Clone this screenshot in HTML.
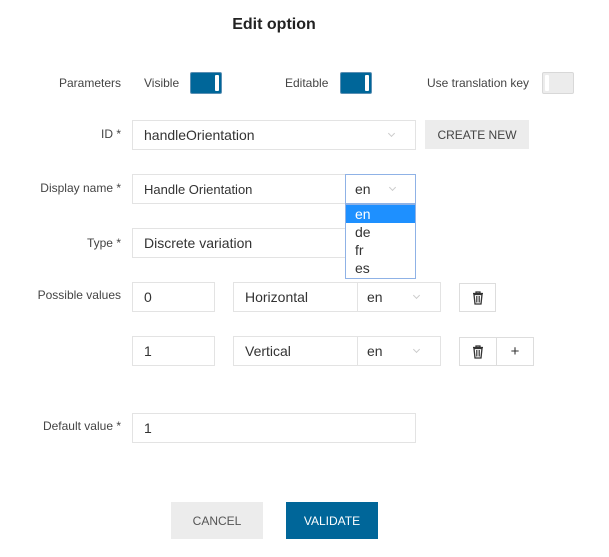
<!DOCTYPE html>
<html><head><meta charset="utf-8"><style>
*{box-sizing:border-box;margin:0;padding:0}
body{width:609px;height:557px;background:#fff;font-family:"Liberation Sans",Arial,sans-serif;color:#333;position:relative;overflow:hidden}
.a{position:absolute}
.lbl{position:absolute;font-size:12px;color:#444;text-align:right;width:121px;left:0}
.inp{position:absolute;border:1px solid #e3e3e3;background:#fff;font-size:14px;color:#333;padding-left:11px;display:flex;align-items:center}
.tg{position:absolute;width:32px;height:22px;border-radius:2px;background:#006699;border:1px solid #5b8fb3}
.tg:after{content:"";position:absolute;right:2px;top:2px;width:4px;height:16px;background:#fff;border-radius:1px}
.tg.off{background:#ececec;border:1px solid #d8d8d8}
.tg.off:after{left:2px;right:auto;background:#fff}
.chev{position:absolute;width:5px;height:5px;border-right:1px solid #ccc;border-bottom:1px solid #ccc;transform:rotate(45deg)}
.btn{position:absolute;display:flex;align-items:center;justify-content:center;font-size:12px}
.ib{position:absolute;border:1px solid #ddd;background:#fff;display:flex;align-items:center;justify-content:center}
</style></head><body>
<div class="a" style="left:0;width:548px;top:16px;text-align:center;font-size:16px;font-weight:bold;color:#222">Edit option</div>

<div class="lbl" style="top:76px">Parameters</div>
<div class="a" style="left:144px;top:76px;font-size:12px;color:#444">Visible</div>
<div class="tg" style="left:190px;top:72px"></div>
<div class="a" style="left:285px;top:76px;font-size:12px;color:#444">Editable</div>
<div class="tg" style="left:340px;top:72px"></div>
<div class="a" style="left:427px;top:76px;font-size:12px;color:#444">Use translation key</div>
<div class="tg off" style="left:542px;top:72px"></div>

<div class="lbl" style="top:127px">ID *</div>
<div class="inp" style="left:132px;top:120px;width:284px;height:30px">handleOrientation</div>
<div class="chev" style="left:389px;top:131px"></div>
<div class="btn" style="left:425px;top:120px;width:104px;height:29px;background:#ececec;color:#444">CREATE NEW</div>

<div class="lbl" style="top:181px">Display name *</div>
<div class="inp" style="left:132px;top:174px;width:214px;height:30px;font-size:13px">Handle Orientation</div>
<div class="inp" style="left:345px;top:174px;width:71px;height:30px;border:1px solid #8fb2e6;padding-left:9px">en</div>
<div class="chev" style="left:390px;top:185px"></div>

<div class="lbl" style="top:236px">Type *</div>
<div class="inp" style="left:132px;top:228px;width:284px;height:30px">Discrete variation</div>

<div class="a" style="left:345px;top:204px;width:71px;height:75px;border:1px solid #8fb2e6;background:#fff;font-size:14px;color:#333">
<div style="background:#1e90ff;color:#fff;height:18px;line-height:18px;padding-left:9px">en</div>
<div style="height:18px;line-height:18px;padding-left:9px">de</div>
<div style="height:18px;line-height:18px;padding-left:9px">fr</div>
<div style="height:18px;line-height:18px;padding-left:9px">es</div>
</div>

<div class="lbl" style="top:288px">Possible values</div>
<div class="inp" style="left:132px;top:282px;width:83px;height:30px">0</div>
<div class="inp" style="left:233px;top:282px;width:125px;height:30px">Horizontal</div>
<div class="inp" style="left:357px;top:282px;width:84px;height:30px;padding-left:9px">en</div>
<div class="chev" style="left:414px;top:293px"></div>
<div class="ib" style="left:459px;top:283px;width:37px;height:29px"><svg width="12" height="14" viewBox="0 0 12 14"><path d="M1 2.5h10M4 2.5V1h4v1.5M2 3.5l1 9.5h6l1-9.5z" fill="none" stroke="#333" stroke-width="1.3"/><path d="M4.5 5v6.5M6 5v6.5M7.5 5v6.5" stroke="#333" stroke-width=".8"/></svg></div>

<div class="inp" style="left:132px;top:336px;width:83px;height:30px">1</div>
<div class="inp" style="left:233px;top:336px;width:125px;height:30px">Vertical</div>
<div class="inp" style="left:357px;top:336px;width:84px;height:30px;padding-left:9px">en</div>
<div class="chev" style="left:414px;top:347px"></div>
<div class="ib" style="left:459px;top:337px;width:38px;height:29px"><svg width="12" height="14" viewBox="0 0 12 14"><path d="M1 2.5h10M4 2.5V1h4v1.5M2 3.5l1 9.5h6l1-9.5z" fill="none" stroke="#333" stroke-width="1.3"/><path d="M4.5 5v6.5M6 5v6.5M7.5 5v6.5" stroke="#333" stroke-width=".8"/></svg></div>
<div class="ib" style="left:496px;top:337px;width:38px;height:29px;font-size:15px;color:#333">+</div>

<div class="lbl" style="top:419px">Default value *</div>
<div class="inp" style="left:132px;top:413px;width:284px;height:30px">1</div>

<div class="btn" style="left:171px;top:502px;width:92px;height:37px;background:#ececec;color:#555">CANCEL</div>
<div class="btn" style="left:286px;top:502px;width:92px;height:37px;background:#006699;color:#fff">VALIDATE</div>
</body></html>
